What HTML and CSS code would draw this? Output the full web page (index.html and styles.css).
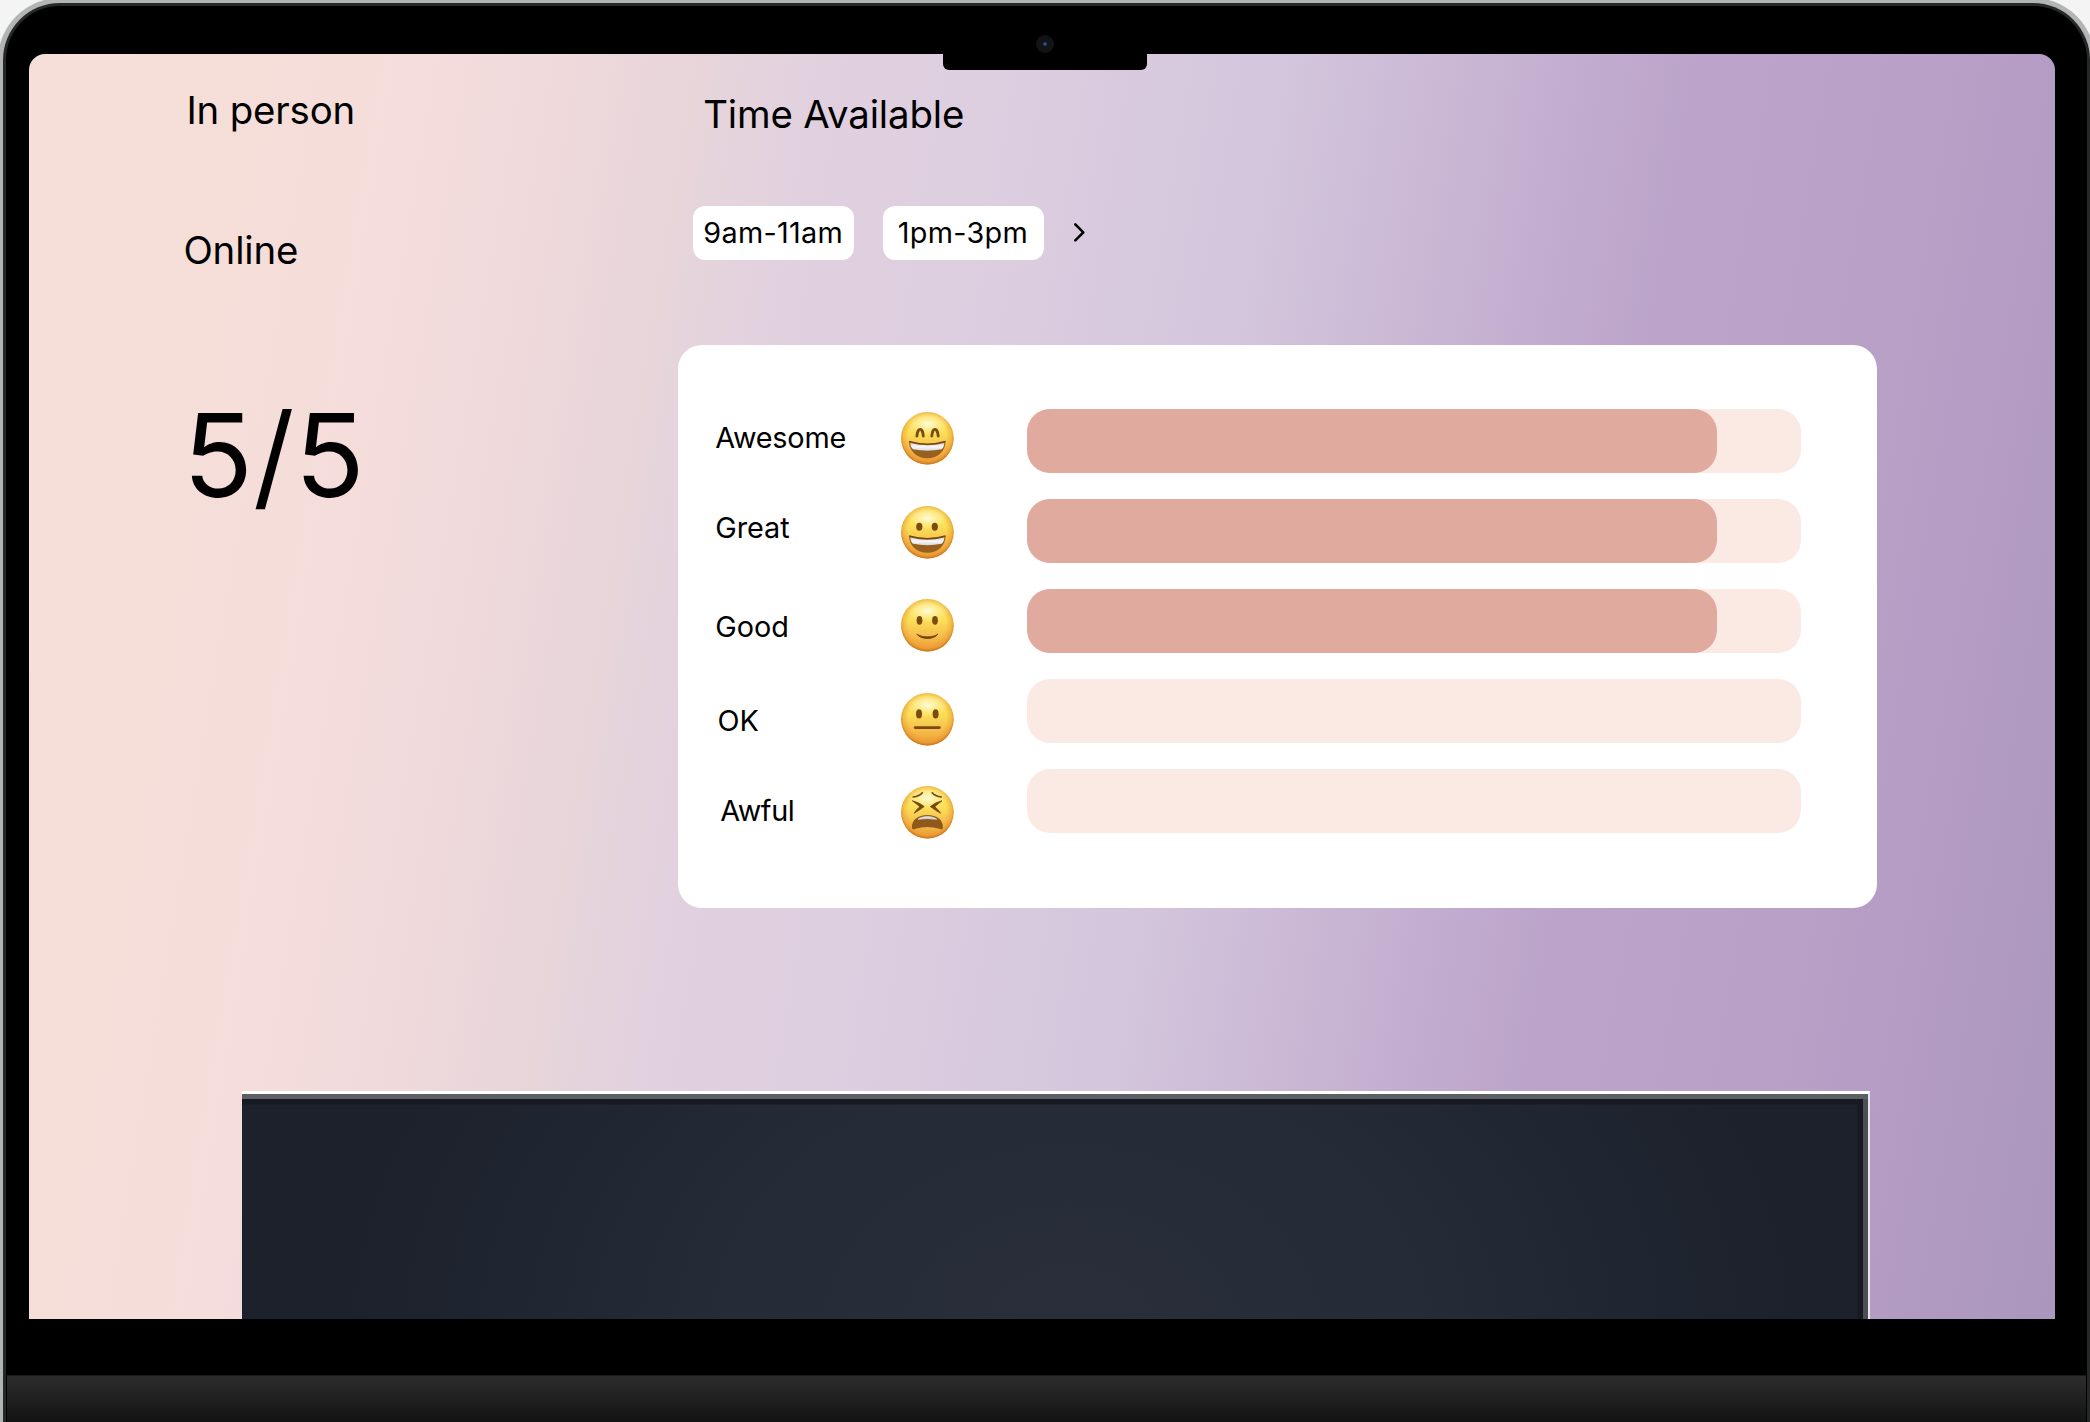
FILE: index.html
```html
<!DOCTYPE html>
<html lang="en">
<head>
<meta charset="utf-8">
<title>Session availability</title>
<link rel="stylesheet" href="styles.css">
</head>
<body>
<svg width="0" height="0" class="defs" aria-hidden="true">
  <defs>
    <linearGradient id="skin" x1="0" y1="0" x2="0" y2="1">
      <stop offset="0" stop-color="#fbe268"/>
      <stop offset=".4" stop-color="#fbdf58"/>
      <stop offset=".7" stop-color="#f6bd4c"/>
      <stop offset="1" stop-color="#ec9c36"/>
    </linearGradient>
    <radialGradient id="rim" cx=".5" cy=".47" r=".53">
      <stop offset=".68" stop-color="#e99a2a" stop-opacity="0"/>
      <stop offset=".88" stop-color="#e8962b" stop-opacity=".5"/>
      <stop offset="1" stop-color="#c46d20" stop-opacity="1"/>
    </radialGradient>
    <radialGradient id="shine" cx=".5" cy=".5" r=".5">
      <stop offset="0" stop-color="#fffde6" stop-opacity=".95"/>
      <stop offset="1" stop-color="#fff6a0" stop-opacity="0"/>
    </radialGradient>
    <linearGradient id="teeth" x1="0" y1="0" x2="0" y2="1">
      <stop offset="0" stop-color="#d9dce4"/>
      <stop offset=".5" stop-color="#f6f7f9"/>
      <stop offset="1" stop-color="#d5d8e0"/>
    </linearGradient>
    <g id="head">
      <circle cx="26.4" cy="26.3" r="26.3" fill="url(#skin)"/>
      <circle cx="26.4" cy="26.3" r="26.3" fill="url(#rim)"/>
      <ellipse cx="26.4" cy="12" rx="21" ry="11.5" fill="url(#shine)"/>
    </g>
    <g id="grin">
      <path d="M8 29.4Q26.4 34.6 44.6 29.4C44.4 39 37 46.2 26.4 46.2C15.600 46.200 8.300 39 8 29.400Z" fill="#97601f"/>
      <path d="M9.300 31Q26.400 35.600 43.400 31C43 34.500 41.800 36.500 40.600 37.300Q26.400 40 12 37.300C10.800 36.300 9.500 34 9.300 31Z" fill="url(#teeth)"/>
      <path d="M8 29.400Q26.400 34.800 44.600 29.400" fill="none" stroke="#754611" stroke-width="1.300"/>
    </g>
  </defs>
</svg>
<div class="laptop">
  <div class="lid">
    <div class="notch"></div>
    <div class="camera"></div>
    <main class="screen">
      <section class="summary">
        <p class="mode in-person">In person</p>
        <p class="mode online">Online</p>
        <p class="score">5/5</p>
      </section>
      <section class="details">
        <h1 class="heading">Time Available</h1>
        <div class="slots">
          <span class="slot">9am-11am</span>
          <span class="slot">1pm-3pm</span>
          <svg class="next" viewBox="0 0 14 22"><path d="M2.300 2.300L10.300 10.300L2.300 18.300" fill="none" stroke="#000" stroke-width="2.600" stroke-linecap="round" stroke-linejoin="round"/></svg>
        </div>
        <div class="card">
          <div class="labels">
            <span class="label awesome">Awesome</span>
            <span class="label great">Great</span>
            <span class="label good">Good</span>
            <span class="label ok">OK</span>
            <span class="label awful">Awful</span>
          </div>
          <div class="faces">
            <svg class="face" viewBox="0 0 53 53"><use href="#head"/><path d="M15.900 24C16.600 15.200 21.800 15.200 22.300 24M30.800 24C31.400 15.200 36.600 15.200 37.200 24" fill="none" stroke="#7a4b13" stroke-width="2.900" stroke-linecap="round"/><use href="#grin"/></svg>
            <svg class="face" viewBox="0 0 53 53"><use href="#head"/><g fill="#7a4b13"><ellipse cx="18.300" cy="20.700" rx="3.100" ry="4"/><ellipse cx="33.800" cy="20.700" rx="3.100" ry="4"/></g><use href="#grin" y=".5"/></svg>
            <svg class="face" viewBox="0 0 53 53"><use href="#head"/><g fill="#7a4b13"><ellipse cx="18.500" cy="21.300" rx="2.900" ry="4.400"/><ellipse cx="34" cy="21.300" rx="2.900" ry="4.400"/></g><path d="M15.800 35C20 41 32.800 41 37 35C32.500 38.800 20.500 38.800 15.800 35Z" fill="#6b400c" stroke="#6b400c" stroke-width=".8" stroke-linejoin="round"/></svg>
            <svg class="face" viewBox="0 0 53 53"><use href="#head"/><g fill="#7a4b13"><ellipse cx="18" cy="20.900" rx="3" ry="4.600"/><ellipse cx="34.600" cy="20.900" rx="3" ry="4.600"/></g><path d="M14.200 34.600H38.300" stroke="#7a4b13" stroke-width="2.900" stroke-linecap="round"/></svg>
            <svg class="face" viewBox="0 0 53 53"><use href="#head"/><g fill="none" stroke="#75460f" stroke-width="1.700" stroke-linecap="round"><path d="M12.200 11C16 10.600 19.500 9 21.300 6.800M40.300 11C36.500 10.600 33 9 31.200 6.800"/></g><path d="M11.300 14.800Q18 16.200 23.200 20.600Q17.500 24.800 13.200 27.200C15 24.500 16.500 22.500 18.800 20.700C16.500 18.500 14 16.800 11.300 14.800ZM41 14.800Q34.500 16.200 29.300 20.600Q35 24.800 39.500 27.200C37.700 24.500 36 22.500 33.800 20.700C36 18.500 38.500 16.800 41 14.800Z" fill="#75460f" stroke="#75460f" stroke-width=".8" stroke-linejoin="round"/><path d="M11 41.500C10.500 34 17 29 26.400 29C36 29 42.400 34 41.900 41.500C41.700 44 40 43.300 38.500 42.700Q26.400 39.300 14.500 42.700C12.500 43.400 11.200 43.800 11 41.500Z" fill="#8f591c"/><path d="M17 33.300C21.500 29.700 31.300 29.700 35.800 33.300Q26.400 31.800 17 33.300Z" fill="#dfe1e7" stroke="#dfe1e7" stroke-width=".7"/></svg>
          </div>
          <div class="bars">
            <div class="bar"><div class="fill" style="width:690px"></div></div>
            <div class="bar"><div class="fill" style="width:690px"></div></div>
            <div class="bar"><div class="fill" style="width:690px"></div></div>
            <div class="bar"></div>
            <div class="bar"></div>
          </div>
        </div>
      </section>
      <div class="panel"></div>
    </main>
    <div class="base"></div>
  </div>
</div>
</body>
</html>
```
FILE: styles.css
```css
* { box-sizing: border-box; }

body {
  margin: 0;
  width: 2090px;
  height: 1422px;
  overflow: hidden;
  background: #f4f4f4;
  color: #000;
  font-family: "Inter", "Liberation Sans", sans-serif;
}

.defs { display: block; height: 0; }

/* silver edge of the lid, running past the viewport */
.laptop {
  margin: -2px -5px 0 -2px;
  height: 1440px;
  padding: 5px 5px 0;
  border-radius: 62px 62px 0 0;
  background: #b3b4b5;
}

.lid {
  position: relative;
  height: 100%;
  border: 3px solid #262727;
  border-bottom: 0;
  border-radius: 57px 57px 0 0;
  background: #000;
  padding: 48px 0 0 23.400px;
}

.notch {
  position: absolute;
  z-index: 2;
  left: 937.400px;
  top: 40px;
  width: 204px;
  height: 24px;
  border-radius: 0 0 6px 6px;
  background: #000;
}

.camera {
  position: absolute;
  z-index: 3;
  left: 1030.400px;
  top: 29px;
  width: 18px;
  height: 18px;
  border-radius: 50%;
  background: radial-gradient(circle, #2c4f8f 0 1.300px, #121315 2.200px);
}

.screen {
  width: 2026px;
  height: 1265px;
  overflow: hidden;
  border-radius: 16px 16px 0 0;
  display: grid;
  grid-template-columns: 648.300px 1199px;
  grid-template-rows: 1037px 228px;
  background: linear-gradient(99.500deg, #f6dfd8 0%, #f5ded9 14%, #f4dcdc 19%, #efd9db 24%, #e7d5da 30%, #e1d1df 35.500%, #dccde0 45%, #d3c5dc 56.500%, #c7b3d2 66%, #bba3c9 75%, #b8a0c7 85%, #b39bc3 92%, #aa97bd 100%);
}

.summary { padding: 32.800px 0 0 157px; }

p, h1 { margin: 0; font-weight: 400; white-space: nowrap; }

.mode, .heading { font-size: 38.400px; line-height: 46px; letter-spacing: -.15px; }
.online { margin: 94.200px 0 0 -3px; }
.score { margin: 113px 0 0 -3.300px; font-size: 115.200px; line-height: 139px; }

.details { padding-top: 37px; }
.heading { padding-left: 25.500px; }

.slots {
  display: flex;
  align-items: center;
  gap: 29px;
  margin: 69.300px 0 0 15.700px;
}

.slot {
  width: 160.700px;
  height: 53.300px;
  border-radius: 12px;
  background: #fff;
  font-size: 28.800px;
  line-height: 53px;
  letter-spacing: .3px;
  text-align: center;
  text-indent: -1px;
}

.next { width: 14px; height: 22px; }

.card {
  display: flex;
  height: 563px;
  margin-top: 85.800px;
  padding: 0 76px 0 37px;
  border-radius: 24px;
  background: #fff;
}

.labels {
  display: flex;
  flex-direction: column;
  width: 186.500px;
  padding-top: 74.900px;
  font-size: 28.800px;
  line-height: 35px;
}

.awesome { padding-left: .500px; letter-spacing: -.2px; }
.great { margin: 54.700px 0 0 .500px; }
.good { margin: 64.400px 0 0 .500px; }
.ok { margin: 58.700px 0 0 2.700px; }
.awful { margin: 55px 0 0 5.500px; letter-spacing: -.4px; }

.faces {
  display: flex;
  flex-direction: column;
  gap: 40.600px;
  padding-top: 66.700px;
}

.face { display: block; width: 53px; height: 53px; }

.bars {
  display: flex;
  flex-direction: column;
  gap: 26.300px;
  width: 774.300px;
  margin-left: 73px;
  padding-top: 63.900px;
}

.bar { height: 63.700px; border-radius: 23px; background: #fbe9e3; }
.fill { height: 100%; border-radius: 23px; background: #e0aa9e; }

/* dark preview, cut off by the bottom of the screen */
.panel {
  grid-column: 1 / -1;
  width: 1628.500px;
  margin-left: 212.500px;
  border-top: 3px solid #fff;
  border-right: 2px solid #e4e6e8;
  background:
    linear-gradient(#5c5f63 0 5.500px, transparent 5.500px),
    linear-gradient(to left, #4c4e54 0 5px, transparent 5px),
    linear-gradient(#171a23 0 10px, transparent 11px),
    linear-gradient(to left, #171a22 0 10px, transparent 11px),
    radial-gradient(ellipse 760px 560px at 51% 105%, #292e3a 0%, #262c37 42%, #202733 68%, #1d212b 95%);
}

.base {
  height: 47px;
  margin: 56px 1px 0 -22.400px;
  border-top: 1px solid #191919;
  background: linear-gradient(#2d2d2d, #131313);
}
```
